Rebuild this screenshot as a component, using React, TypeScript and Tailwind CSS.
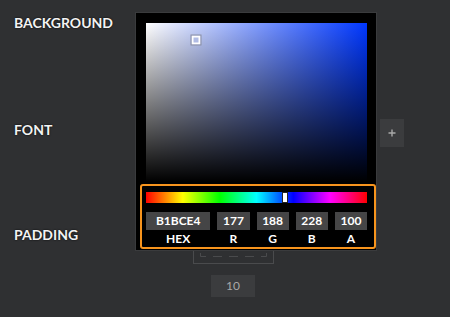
import React from 'react';

const LABEL = "block font-['Lato',sans-serif] text-[14px] leading-[16px] font-bold text-[#f3f3f3] [text-shadow:0_0_2px_#000]";

const FIELDS = [
  { label: 'HEX', value: 'B1BCE4' },
  { label: 'R', value: '177' },
  { label: 'G', value: '188' },
  { label: 'B', value: '228' },
  { label: 'A', value: '100' },
];

function ColorPopover() {
  return (
    <div className="absolute left-[135px] top-[12px] w-[242px] border border-[#3a3b3d] bg-black pl-[10px] pr-[9px] pt-[10px] pb-[4px]">
      {/* saturation / value area */}
      <div className="relative h-[159px] w-full bg-[linear-gradient(to_right,#fff,#0037ff)]">
        <div className="absolute inset-0 bg-[linear-gradient(to_top,#000,transparent)]" />
        <div className="absolute left-[22.8%] top-[10.7%] -translate-x-1/2 -translate-y-1/2 h-[9px] w-[9px] border-2 border-white bg-[#B1BCE4] outline outline-1 outline-[#8a8fa6]" />
      </div>

      {/* hue slider */}
      <div className="relative mt-[10px] h-[11px] w-full bg-[linear-gradient(to_right,#f00,#ff0,#0f0,#0ff,#00f,#f0f,#f00)]">
        <div className="absolute left-[62.7%] top-0 h-[11px] w-[6px] -translate-x-1/2 border border-[#222] bg-white" />
      </div>

      {/* value fields */}
      <div className="mt-[9px] grid grid-cols-[2fr_1fr_1fr_1fr_1fr] gap-x-[7px] font-['Lato',sans-serif] font-bold text-white">
        {FIELDS.map((f) => (
          <div key={f.label} className="flex h-[18px] items-center justify-center bg-[#454546] text-[12px]">
            {f.value}
          </div>
        ))}
        {FIELDS.map((f) => (
          <div key={f.label + '-l'} className="mt-[2px] text-center text-[12px] leading-[14px]">
            {f.label}
          </div>
        ))}
      </div>

      {/* highlight */}
      <div className="pointer-events-none absolute left-[4px] top-[171px] h-[65px] w-[236px] rounded-[3px] border-[2.5px] border-[#f7941d]" />
    </div>
  );
}

export default function App() {
  return (
    <div className="relative h-[317px] w-[450px] overflow-hidden bg-[#2f3032]">
      <div className="flex flex-col pl-[14px]">
        {/* Background row */}
        <div className="h-[119px] pt-[15px]">
          <span className={LABEL}>BACKGROUND</span>
        </div>

        {/* Font row */}
        <div className="flex h-[28px] items-start justify-between pr-[46px]">
          <span className={`${LABEL} mt-[3px]`}>FONT</span>
          <button className="flex h-[28px] w-[24px] items-center justify-center bg-[#3b3c3e]">
            <svg width="8" height="8" viewBox="0 0 8 8">
              <path d="M4 0.5 V7.5 M0.5 4 H7.5" stroke="#a9a9a9" strokeWidth="1.4" />
            </svg>
          </button>
        </div>

        {/* Padding row */}
        <div className="mt-[73px] flex">
          <span className={`${LABEL} mt-[7px] w-[179px]`}>PADDING</span>
          <div className="flex flex-col">
            <div className="relative h-[44px] w-[81px] border border-[#4a4b4d]">
              <svg className="absolute left-0 top-0" width="79" height="42" viewBox="0 0 79 42">
                <path
                  d="M6.5 0 V35.5 H72.5 V0"
                  fill="none"
                  stroke="#4a4b4d"
                  strokeWidth="1"
                  strokeDasharray="9 7"
                />
              </svg>
            </div>
            <div className="ml-[18px] mt-[11px] flex h-[22px] w-[44px] items-center justify-center bg-[#3b3c3e] font-['Lato',sans-serif] text-[12px] text-[#a8a8a8]">
              10
            </div>
          </div>
        </div>
      </div>

      <ColorPopover />
    </div>
  );
}
